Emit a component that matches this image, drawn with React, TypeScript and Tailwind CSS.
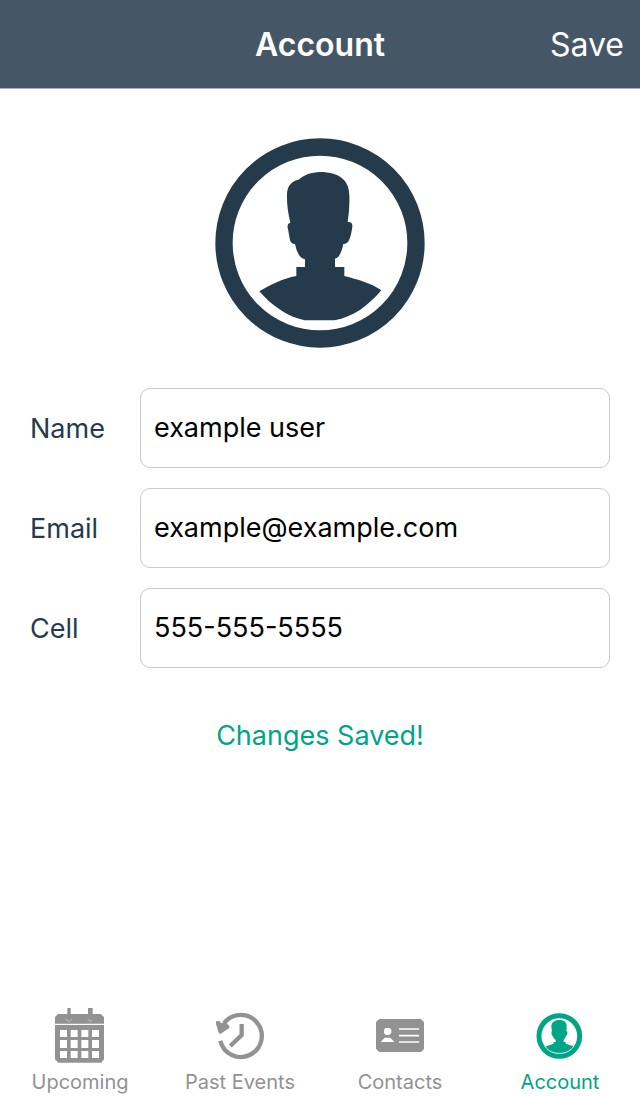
import { useState } from "react";
import type { ReactNode } from "react";

function Avatar() {
  return (
    <svg viewBox="45 38 630 630" className="size-[210px] text-[#253b4b]" role="img" aria-label="Profile picture">
      <circle cx="360" cy="353" r="288" fill="none" stroke="currentColor" strokeWidth="52" />
      <path
        fill="currentColor"
        d="M271 292C264 262 260 236 261 205C262 181 276 166 296 163C312 148 334 141 360 140C389 140 414 146 431 163C443 175 447 190 448 208C449 238 447 264 443 290C454 289 458 294 457 304C455 319 452 334 447 345C443 353 438 356 430 356C427 371 423 383 416 393C412 398 409 399 405 400V425H433V452C473 463 512 472 544 495C504 542 459 575 404 585H314C261 574 214 540 178 498C214 476 249 460 289 452V425H315V402C303 399 297 391 292 379C288 370 287 363 285 356C277 356 272 352 270 344C267 332 266 317 263 308C262 298 264 293 271 292Z"
      />
    </svg>
  );
}

function AccountIcon() {
  return (
    <svg viewBox="105 21 150 171" className="h-[57px] w-[50px]" aria-hidden="true">
      <circle cx="178" cy="108" r="61" fill="none" stroke="currentColor" strokeWidth="15" />
      <path
        fill="currentColor"
        d="M156 92C153 79 153 70 161 65C169 58 188 58 195 65C201 71 201 80 199 93C204 94 203 105 198 108C196 114 193 118 191 120V126H197V131C206 134 215 136 223 140C203 168 154 168 134 141C144 136 152 134 161 131V126H167V120C163 118 160 113 158 108C154 105 153 95 156 92Z"
      />
      <path d="M140 157L134 143C153 168 204 168 224 142L216 157C197 174 158 174 140 157Z" fill="currentColor" />
      <path d="M135 139C154 167 202 168 222 138" fill="none" stroke="white" strokeWidth="2.5" />
    </svg>
  );
}

function CalendarIcon() {
  return (
    <svg viewBox="105 21 150 171" className="h-[57px] w-[50px]" aria-hidden="true">
      <path fill="currentColor" d="M142 24H152V42H204V24H218V42H242L252 51V71H105V51L114 42H142Z" />
      <path
        fill="currentColor"
        fillRule="evenodd"
        d="M105 75H252V178L244 188H115L105 178ZM120 90V111H141V90ZM152 90V111H173V90ZM184 90V111H205V90ZM216 90V111H237V90ZM120 120V144H141V120ZM152 120V144H173V120ZM184 120V144H205V120ZM216 120V144H237V120ZM120 153V174H141V153ZM152 153V174H173V153ZM184 153V174H205V153ZM216 153V174H237V153Z"
      />
      <path d="M138 58Q147 69 156 58M204 58Q211 69 218 58" fill="none" stroke="white" strokeWidth="2" strokeDasharray="4 2" />
    </svg>
  );
}

function HistoryIcon() {
  return (
    <svg viewBox="120 21 150 171" className="h-[57px] w-[50px]" aria-hidden="true">
      <path d="M147 70A63 63 0 1 1 136 122" fill="none" stroke="currentColor" strokeWidth="13" />
      <path d="M123 64L133 63L139 70L151 66L163 78V84L136 102L131 98L123 72Z" fill="currentColor" />
      <path d="M200 72V105L166 138" fill="none" stroke="currentColor" strokeWidth="13" />
    </svg>
  );
}

function ContactsIcon() {
  return (
    <svg viewBox="105 21 150 171" className="h-[57px] w-[50px]" aria-hidden="true">
      <path d="M118 57H243L252 66V147L243 156H118L108 147V66Z" fill="currentColor" />
      <path d="M136 84H149L154 89V98L148 105H137L132 99V89ZM122 126L134 113H151L163 126Z" fill="white" />
      <path d="M177 87H237M177 107H237M177 126H237" stroke="white" strokeWidth="5" />
    </svg>
  );
}

type FieldProps = {
  id: string;
  label: string;
  type: string;
  value: string;
  onChange: (value: string) => void;
};

function Field({ id, label, type, value, onChange }: FieldProps) {
  return (
    <div className="flex items-center">
      <label htmlFor={id} className="w-[110px] shrink-0 pt-0.5 text-[27px] leading-10 text-[#253b4b]">
        {label}
      </label>
      <input
        id={id}
        type={type}
        value={value}
        onChange={(event) => onChange(event.target.value)}
        className="h-20 min-w-0 flex-1 rounded-[10px] border border-[#cccccc] bg-white px-[13px] pb-0.5 text-[27px] leading-10 text-black outline-none"
      />
    </div>
  );
}

const tabs: { name: string; icon: ReactNode }[] = [
  { name: "Upcoming", icon: <CalendarIcon /> },
  { name: "Past Events", icon: <HistoryIcon /> },
  { name: "Contacts", icon: <ContactsIcon /> },
  { name: "Account", icon: <AccountIcon /> },
];

export default function App() {
  const [name, setName] = useState("example user");
  const [email, setEmail] = useState("example@example.com");
  const [cell, setCell] = useState("555-555-5555");

  return (
    <div className="flex min-h-screen flex-col bg-white font-['Inter',sans-serif]">
      <header className="grid h-[89px] grid-cols-3 items-center border-b border-[#a7adb2] bg-[#455766] px-4 pt-0.5 text-white">
        <h1 className="col-start-2 text-center text-[32px] leading-10 font-semibold">Account</h1>
        <button type="button" className="justify-self-end text-[32px] leading-10">
          Save
        </button>
      </header>

      <main className="flex flex-1 flex-col px-[30px] pt-[49px]">
        <div className="flex justify-center">
          <Avatar />
        </div>
        <form className="mt-10 flex flex-col gap-5" onSubmit={(event) => event.preventDefault()}>
          <Field id="name" label="Name" type="text" value={name} onChange={setName} />
          <Field id="email" label="Email" type="email" value={email} onChange={setEmail} />
          <Field id="cell" label="Cell" type="tel" value={cell} onChange={setCell} />
        </form>
        <p role="status" className="mt-12 text-center text-[27px] leading-10 text-[#00a585]">
          Changes Saved!
        </p>
      </main>

      <nav className="grid grid-cols-4 pb-0.5">
        {tabs.map((tab) => (
          <a
            key={tab.name}
            href="#"
            aria-current={tab.name === "Account" ? "page" : undefined}
            className="flex flex-col items-center gap-1.5 text-[#929292] aria-[current=page]:text-[#00a585]"
          >
            {tab.icon}
            <span className="text-xl leading-6">{tab.name}</span>
          </a>
        ))}
      </nav>
    </div>
  );
}
